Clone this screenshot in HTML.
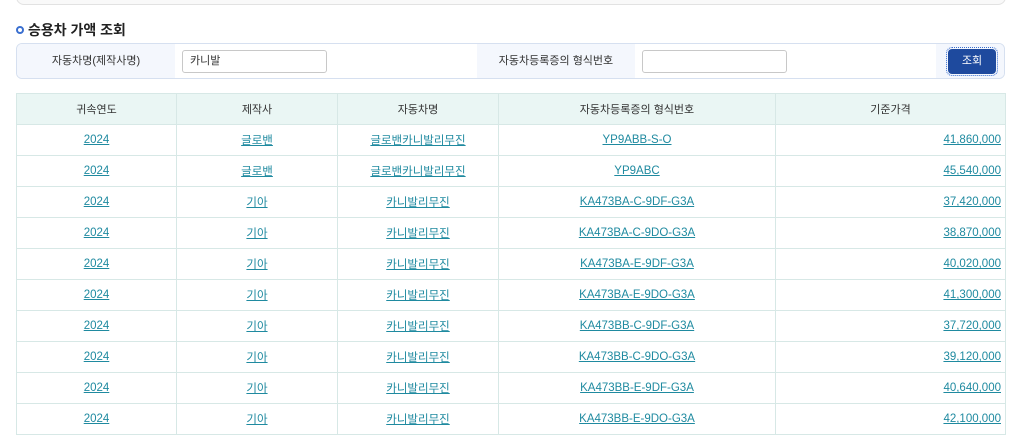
<!DOCTYPE html>
<html><head><meta charset="utf-8"><style>
*{margin:0;padding:0;box-sizing:border-box}
body{width:1024px;height:438px;overflow:hidden;background:#fff;font-family:"Liberation Sans","Noto Sans CJK KR",sans-serif;font-size:11px;color:#333;position:relative}
.top{position:absolute;left:16px;top:-20px;width:990px;height:25px;border:1px solid #e2e2e2;border-radius:8px;background:#f9f9f9}
.title{position:absolute;left:16px;top:20px;font-size:14px;font-weight:bold;color:#222}
.title i{display:inline-block;width:8px;height:8px;border:2px solid #3a6fd0;border-radius:50%;margin-right:4px;vertical-align:1px}
.search{position:absolute;left:16px;top:43px;width:989px;height:36px;border:1px solid #d6e0f0;border-radius:6px;background:#fff;overflow:hidden}
.lab{position:absolute;top:0;height:34px;background:#f4f7fd;line-height:34px;text-align:center;color:#333}
.inp{position:absolute;top:6px;height:23px;border:1px solid #c8c8c8;border-radius:3px;background:#fff;padding-left:7px;line-height:21px}
.btn{position:absolute;left:931px;top:5px;width:48px;height:25px;background:#1e4a9e;border-radius:4px;color:#fff;text-align:center;line-height:25px;outline:1px dotted #3a6fd0;outline-offset:1px}
table{position:absolute;left:16px;top:93px;width:990px;border-collapse:collapse}
td,th{border:1px solid #d7e8e6;height:31px;text-align:center;font-weight:normal}
th{background:#eaf6f4;color:#333}
td{color:#1f8aa0;text-decoration:underline;font-size:11.5px}
td.r{text-align:right;padding-right:4px}
</style></head><body>
<div class="top"></div>
<div class="title"><i></i>승용차 가액 조회</div>
<div class="search">
<div class="lab" style="left:0;width:158px">자동차명(제작사명)</div>
<div class="inp" style="left:165px;width:145px">카니발</div>
<div class="lab" style="left:460px;width:158px">자동차등록증의 형식번호</div>
<div class="inp" style="left:625px;width:145px"></div>
<div class="lab" style="left:919px;width:70px"></div>
<div class="btn">조회</div>
</div>
<table>
<tr><th style="width:160px">귀속연도</th><th style="width:161px">제작사</th><th style="width:161px">자동차명</th><th style="width:277px">자동차등록증의 형식번호</th><th>기준가격</th></tr>
<tr><td>2024</td><td>글로밴</td><td>글로밴카니발리무진</td><td>YP9ABB-S-O</td><td class="r">41,860,000</td></tr>
<tr><td>2024</td><td>글로밴</td><td>글로밴카니발리무진</td><td>YP9ABC</td><td class="r">45,540,000</td></tr>
<tr><td>2024</td><td>기아</td><td>카니발리무진</td><td>KA473BA-C-9DF-G3A</td><td class="r">37,420,000</td></tr>
<tr><td>2024</td><td>기아</td><td>카니발리무진</td><td>KA473BA-C-9DO-G3A</td><td class="r">38,870,000</td></tr>
<tr><td>2024</td><td>기아</td><td>카니발리무진</td><td>KA473BA-E-9DF-G3A</td><td class="r">40,020,000</td></tr>
<tr><td>2024</td><td>기아</td><td>카니발리무진</td><td>KA473BA-E-9DO-G3A</td><td class="r">41,300,000</td></tr>
<tr><td>2024</td><td>기아</td><td>카니발리무진</td><td>KA473BB-C-9DF-G3A</td><td class="r">37,720,000</td></tr>
<tr><td>2024</td><td>기아</td><td>카니발리무진</td><td>KA473BB-C-9DO-G3A</td><td class="r">39,120,000</td></tr>
<tr><td>2024</td><td>기아</td><td>카니발리무진</td><td>KA473BB-E-9DF-G3A</td><td class="r">40,640,000</td></tr>
<tr><td>2024</td><td>기아</td><td>카니발리무진</td><td>KA473BB-E-9DO-G3A</td><td class="r">42,100,000</td></tr>
</table>
</body></html>
